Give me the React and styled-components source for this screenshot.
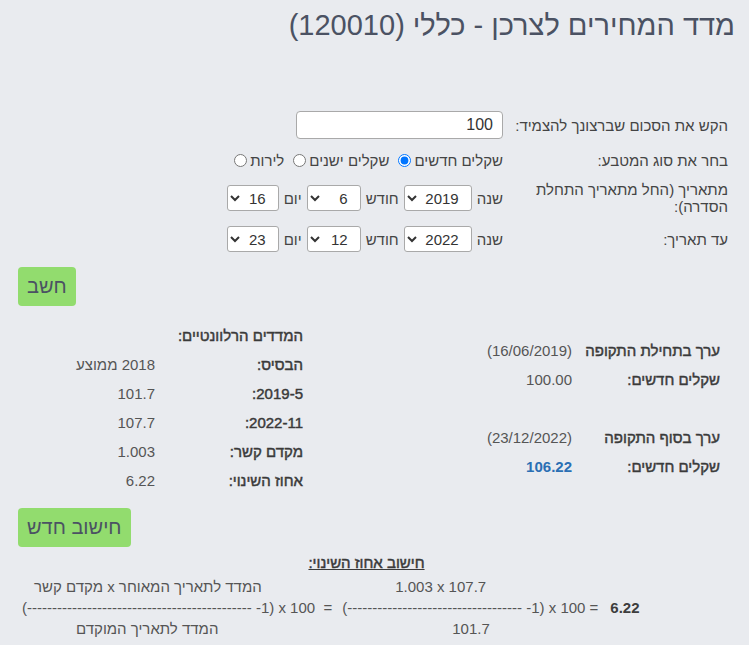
import styled, { createGlobalStyle } from 'styled-components';

const GlobalStyle = createGlobalStyle`
  body {
    margin: 0;
    background: #e9ebef;
    font-family: "Liberation Sans", Arial, sans-serif;
    font-size: 15px;
    color: #4a4a4a;
  }
`;

const Page = styled.div`
  direction: rtl;
  padding: 9px 14px 20px 18px;
`;

const Title = styled.h1`
  margin: 0;
  font-size: 29px;
  line-height: 33px;
  font-weight: normal;
  color: #4b5263;
`;

const Form = styled.div`
  display: grid;
  grid-template-columns: 220px auto;
  grid-template-rows: 28px 20px auto auto;
  column-gap: 5px;
  row-gap: 11px;
  align-items: center;
  justify-content: start;
  margin: 69px 7px 0 0;
`;

const FieldLabel = styled.div`
  color: #444;
  line-height: normal;
  padding-left: ${(p) => p.$wrapAt || 0}px;
`;

const Controls = styled.div`
  display: flex;
  align-items: center;
`;

const AmountInput = styled.input`
  box-sizing: border-box;
  width: 207px;
  height: 28px;
  border: 1px solid #a9a9a9;
  border-radius: 4px;
  background: #fff;
  padding: 0 9px;
  font: inherit;
  font-size: 16px;
  color: #333;
  direction: rtl;
`;

const RadioLabel = styled.label`
  display: inline-flex;
  align-items: center;
  gap: 3px;
  margin-left: 9px;
  color: #444;

  input {
    margin: 0;
    width: 13px;
    height: 13px;
  }
`;

const DatePart = styled.span`
  display: inline-flex;
  align-items: center;
  gap: 5px;
  margin-left: 5px;
  color: #444;
`;

const Select = styled.select`
  box-sizing: border-box;
  width: ${(p) => p.$w}px;
  height: 26px;
  border: 1px solid #a9a9a9;
  border-radius: 3px;
  background: #fff;
  font: inherit;
  font-size: 15px;
  color: #333;
  padding: 0 8px 0 4px;
  direction: rtl;
`;

const ButtonRow = styled.div`
  display: flex;
  justify-content: flex-end;
  margin-top: ${(p) => p.$top}px;
`;

const GreenButton = styled.button`
  background: #92dc6e;
  border: none;
  border-radius: 4px;
  height: 39px;
  padding: 0 9px;
  font-family: "Liberation Sans", Arial, sans-serif;
  font-size: 20px;
  color: #4b5263;
`;

const Results = styled.div`
  display: grid;
  grid-template-columns: 417px auto;
  align-items: center;
  margin: 15px 15px 0 0;
`;

const InfoTable = styled.div`
  display: grid;
  grid-template-columns: 148px auto;
  grid-auto-rows: 29px;
  align-items: center;
  justify-content: start;
`;

/* the bold Hebrew cut is much wider than the reference's, so the labels
   are thickened with a stroke instead of switching to the bold face */
const InfoLabel = styled.div`
  color: #3a3a3a;
  -webkit-text-stroke: 0.45px #3a3a3a;
  white-space: nowrap;
`;

const InfoValue = styled.div`
  color: ${(p) => (p.$highlight ? '#2a6fb4' : '#555')};
  font-weight: ${(p) => (p.$highlight ? 'bold' : 'normal')};
  white-space: nowrap;
`;

const FormulaTitle = styled.div`
  margin: 7px 20px 0 0;
  text-align: center;
  text-decoration: underline;
  color: #3a3a3a;
  -webkit-text-stroke: 0.45px #3a3a3a;
  line-height: 17px;
`;

const Formula = styled.div`
  direction: ltr;
  display: flex;
  align-items: flex-start;
  margin: 5px 0 0 4px;
  line-height: 21px;
  color: #555;
`;

const Fraction = styled.div`
  display: flex;
  flex-direction: column;
  align-items: flex-start;
  margin-right: ${(p) => p.$after || 0}px;
`;

const FracPart = styled.div`
  direction: ${(p) => (p.$rtl ? 'rtl' : 'ltr')};
  margin-left: ${(p) => p.$shift || 0}px;
  white-space: pre;
`;

const FormulaResult = styled.div`
  margin: 21px 0 0 12px;
  font-weight: bold;
  color: #3d3d3d;
`;

const dashes = (n) => '(' + '-'.repeat(n) + ' -1) x 100';

const DateSelects = ({ year, month, day }) => (
  <Controls>
    <DatePart>
      שנה
      <Select $w={68} defaultValue={year}>
        <option>{year}</option>
      </Select>
    </DatePart>
    <DatePart>
      חודש
      <Select $w={54} defaultValue={month}>
        <option>{month}</option>
      </Select>
    </DatePart>
    <DatePart>
      יום
      <Select $w={52} defaultValue={day}>
        <option>{day}</option>
      </Select>
    </DatePart>
  </Controls>
);

export default function App() {
  return (
    <>
      <GlobalStyle />
      <Page>
        <Title>מדד המחירים לצרכן - כללי (120010)</Title>

        <Form>
          <FieldLabel>הקש את הסכום שברצונך להצמיד:</FieldLabel>
          <Controls>
            <AmountInput defaultValue="100" />
          </Controls>

          <FieldLabel>בחר את סוג המטבע:</FieldLabel>
          <Controls>
            <RadioLabel>
              שקלים חדשים
              <input type="radio" name="coin" defaultChecked />
            </RadioLabel>
            <RadioLabel>
              שקלים ישנים
              <input type="radio" name="coin" />
            </RadioLabel>
            <RadioLabel>
              לירות
              <input type="radio" name="coin" />
            </RadioLabel>
          </Controls>

          <FieldLabel $wrapAt={25}>מתאריך (החל מתאריך התחלת הסדרה):</FieldLabel>
          <DateSelects year="2019" month="6" day="16" />

          <FieldLabel>עד תאריך:</FieldLabel>
          <DateSelects year="2022" month="12" day="23" />
        </Form>

        <ButtonRow $top={15}>
          <GreenButton>חשב</GreenButton>
        </ButtonRow>

        <Results>
          <InfoTable>
            <InfoLabel>ערך בתחילת התקופה</InfoLabel>
            <InfoValue>(16/06/2019)</InfoValue>
            <InfoLabel>שקלים חדשים:</InfoLabel>
            <InfoValue>100.00</InfoValue>
            <InfoLabel />
            <InfoValue />
            <InfoLabel>ערך בסוף התקופה</InfoLabel>
            <InfoValue>(23/12/2022)</InfoValue>
            <InfoLabel>שקלים חדשים:</InfoLabel>
            <InfoValue $highlight>106.22</InfoValue>
          </InfoTable>

          <InfoTable>
            <InfoLabel>המדדים הרלוונטיים:</InfoLabel>
            <InfoValue />
            <InfoLabel>הבסיס:</InfoLabel>
            <InfoValue>2018 ממוצע</InfoValue>
            <InfoLabel>2019-5:</InfoLabel>
            <InfoValue>101.7</InfoValue>
            <InfoLabel>2022-11:</InfoLabel>
            <InfoValue>107.7</InfoValue>
            <InfoLabel>מקדם קשר:</InfoLabel>
            <InfoValue>1.003</InfoValue>
            <InfoLabel>אחוז השינוי:</InfoLabel>
            <InfoValue>6.22</InfoValue>
          </InfoTable>
        </Results>

        <ButtonRow $top={13}>
          <GreenButton>חישוב חדש</GreenButton>
        </ButtonRow>

        <FormulaTitle>חישוב אחוז השינוי:</FormulaTitle>
        <Formula>
          <Fraction $after={10}>
            <FracPart $rtl $shift={12}>המדד לתאריך המאוחר x מקדם קשר</FracPart>
            <FracPart>{dashes(45) + '  ='}</FracPart>
            <FracPart $rtl $shift={54}>המדד לתאריך המוקדם</FracPart>
          </Fraction>
          <Fraction>
            <FracPart $shift={53}>1.003 x 107.7</FracPart>
            <FracPart>{dashes(35) + ' ='}</FracPart>
            <FracPart $shift={110}>101.7</FracPart>
          </Fraction>
          <FormulaResult>6.22</FormulaResult>
        </Formula>
      </Page>
    </>
  );
}
